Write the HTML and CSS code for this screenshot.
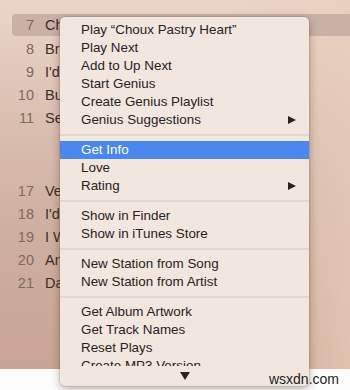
FILE: index.html
```html
<!DOCTYPE html>
<html>
<head>
<meta charset="utf-8">
<link rel="stylesheet" href="styles.css">
</head>
<body>
<div class="screen">
  <div class="tracks">
    <div class="row selected"><span class="num">7</span><span class="title">Ch</span></div>
    <div class="row"><span class="num">8</span><span class="title">Br</span></div>
    <div class="row"><span class="num">9</span><span class="title">I'd</span></div>
    <div class="row"><span class="num">10</span><span class="title">Bu</span></div>
    <div class="row"><span class="num">11</span><span class="title">Se</span></div>
    <div class="gap"></div>
    <div class="row"><span class="num">17</span><span class="title">Ve</span></div>
    <div class="row"><span class="num">18</span><span class="title">I'd</span></div>
    <div class="row"><span class="num">19</span><span class="title">I W</span></div>
    <div class="row"><span class="num">20</span><span class="title">An</span></div>
    <div class="row"><span class="num">21</span><span class="title">Da</span></div>
  </div>
  <div class="footer"><span class="mark">wsxdn.com</span></div>

  <div class="menu">
    <div class="menu-list">
      <div class="item">Play “Choux Pastry Heart”</div>
      <div class="item">Play Next</div>
      <div class="item">Add to Up Next</div>
      <div class="item">Start Genius</div>
      <div class="item">Create Genius Playlist</div>
      <div class="item sub">Genius Suggestions<span class="arrow"></span></div>
      <div class="sep"></div>
      <div class="item active">Get Info</div>
      <div class="item">Love</div>
      <div class="item sub">Rating<span class="arrow"></span></div>
      <div class="sep"></div>
      <div class="item">Show in Finder</div>
      <div class="item">Show in iTunes Store</div>
      <div class="sep"></div>
      <div class="item">New Station from Song</div>
      <div class="item">New Station from Artist</div>
      <div class="sep"></div>
      <div class="item">Get Album Artwork</div>
      <div class="item">Get Track Names</div>
      <div class="item">Reset Plays</div>
      <div class="item">Create MP3 Version</div>
    </div>
    <div class="menu-scroll"><span class="down"></span></div>
  </div>
</div>
</body>
</html>
```

FILE: styles.css
```css
html, body {
  margin: 0;
  padding: 0;
}
body {
  width: 350px;
  height: 390px;
  overflow: hidden;
  font-family: "Liberation Sans", Arial, sans-serif;
}
.screen {
  position: relative;
  width: 350px;
  height: 390px;
  display: flex;
  flex-direction: column;
}
.tracks {
  flex: 1;
  padding-top: 14px;
  background:
    linear-gradient(to right, rgba(236, 214, 196, 0) 0%, rgba(236, 214, 196, 0) 60%, rgba(233, 206, 186, 0.7) 100%),
    linear-gradient(to bottom, #ead6c9 0%, #dcc1b3 30%, #cfb0a1 60%, #c8a494 100%);
  overflow: hidden;
}
.row {
  height: 23px;
  display: flex;
  align-items: center;
  font-size: 14.5px;
  margin-left: 12px;
}
.row.selected {
  height: 22px;
  margin-bottom: 1px;
  background: #c9b1a5;
  border-radius: 4px 0 0 4px;
}
.num {
  width: 22px;
  text-align: right;
  color: #7d6a61;
}
.title {
  margin-left: 11px;
  width: 15px;
  overflow: hidden;
  color: #3a2f2a;
  white-space: nowrap;
}
.gap {
  height: 50px;
}
.footer {
  height: 21px;
  background: #fdfdfd;
  display: flex;
  justify-content: flex-end;
  align-items: flex-end;
}
.mark {
  position: relative;
  z-index: 2;
  font-size: 14px;
  color: #1e1e1e;
  margin-right: 11px;
  margin-bottom: 3px;
  line-height: 16px;
}
.menu {
  position: absolute;
  z-index: 1;
  left: 60px;
  top: 17px;
  width: 249px;
  height: 369px;
  background: #f1e7df;
  border-radius: 5px;
  box-shadow: 0 0 0 0.5px rgba(80, 50, 40, 0.25), 0 3px 10px rgba(60, 30, 20, 0.35);
  display: flex;
  flex-direction: column;
  overflow: hidden;
}
.menu-list {
  height: 349px;
  padding-top: 4px;
  box-sizing: border-box;
  overflow: hidden;
}
.item {
  height: 18px;
  line-height: 18px;
  padding-left: 21px;
  padding-right: 13px;
  font-size: 13.4px;
  color: #2a221e;
  display: flex;
  align-items: center;
  justify-content: space-between;
  white-space: nowrap;
}
.item.active {
  background: #4a87ee;
  color: #ffffff;
}
.arrow {
  width: 0;
  height: 0;
  border-top: 4.5px solid transparent;
  border-bottom: 4.5px solid transparent;
  border-left: 8px solid #2a221e;
}
.sep {
  height: 12px;
  display: flex;
  align-items: center;
}
.sep::before {
  content: "";
  display: block;
  width: 100%;
  height: 2px;
  background: #e2d6cd;
}
.menu-scroll {
  height: 20px;
  display: flex;
  justify-content: center;
  align-items: center;
}
.down {
  width: 0;
  height: 0;
  border-left: 5px solid transparent;
  border-right: 5px solid transparent;
  border-top: 8px solid #2a221e;
}
```
